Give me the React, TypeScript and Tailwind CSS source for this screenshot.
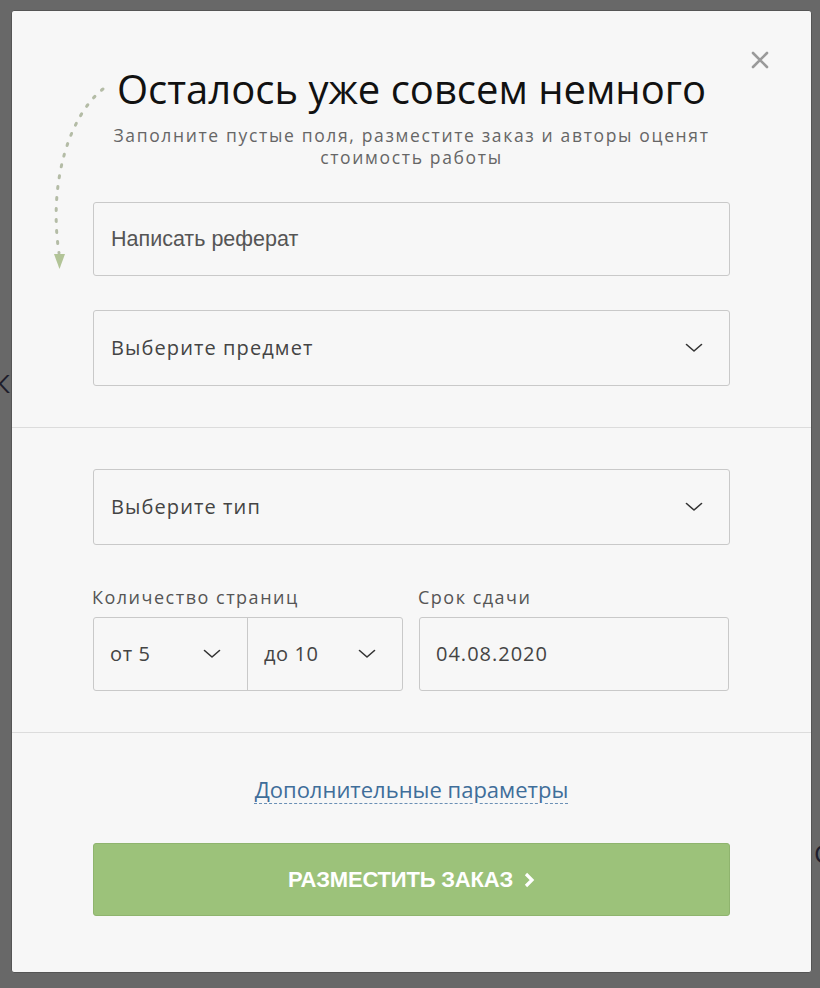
import React from "react";

const Chevron = () => (
  <svg width="18" height="10" viewBox="0 0 18 10" fill="none">
    <polyline points="1.5,1.5 9,8 16.5,1.5" stroke="#333" strokeWidth="1.6" strokeLinecap="round" strokeLinejoin="round" />
  </svg>
);

// dotted arrow at the left of the title
const Arc = () => (
  <svg className="absolute left-[28px] top-[70px]" width="80" height="200" viewBox="0 0 80 200" fill="none">
    <path
      d="M63 8 C 30 34, 8 100, 19 172"
      stroke="#b4bca6"
      strokeWidth="3"
      strokeDasharray="2 9"
      strokeLinecap="round"
    />
    <polygon points="14,173 25,173 19.5,188" fill="#b2c497" />
  </svg>
);

const App = () => {
  return (
    <div className="relative w-[820px] h-[988px] bg-[#686868] overflow-hidden" style={{ fontFamily: '"Open Sans", "Noto Sans", sans-serif' }}>
      {/* page text peeking behind the overlay */}
      <div className="absolute left-[-6px] top-[364px] text-[26px] text-[#1d1d2b]">К</div>
      <div className="absolute left-[814px] top-[834px] text-[26px] text-[#1d1d2b]">С</div>

      <div className="relative ml-[11px] mt-[10px] w-[801px] h-[963px] bg-[#f7f7f7] rounded-[3px] border border-[#555]">
        <Arc />
        <button className="absolute right-[42px] top-[40px] text-[#999]">
          <svg width="18" height="18" viewBox="0 0 18 18">
            <path d="M2 2 L16 16 M16 2 L2 16" stroke="#9a9a9a" strokeWidth="2.6" strokeLinecap="round" />
          </svg>
        </button>

        <div className="px-[81px] pt-[55px]">
          <h1 className="text-center text-[40px] leading-[46px] text-[#111]">Осталось уже совсем немного</h1>
          <p className="mt-[12px] text-center text-[17.5px] leading-[22px] text-[#666] tracking-[1.65px]">
            Заполните пустые поля, разместите заказ и авторы оценят
            <br />
            стоимость работы
          </p>

          <div
            className="mt-[34px] h-[74px] border border-[#c9c9c9] rounded-[3px] flex items-center px-[17px] text-[21.5px] text-[#555]"
            style={{ fontFamily: '"Liberation Sans", Arial, sans-serif' }}
          >
            Написать реферат
          </div>

          <div className="mt-[34px] h-[76px] border border-[#c9c9c9] rounded-[3px] flex items-center justify-between pl-[17px] pr-[26px] text-[20px] tracking-[1.1px] text-[#444]">
            <span>Выберите предмет</span>
            <Chevron />
          </div>
        </div>

        <div className="mt-[41px] h-px bg-[#dcdcdc]" />

        <div className="px-[81px]">
          <div className="mt-[41px] h-[76px] border border-[#c9c9c9] rounded-[3px] flex items-center justify-between pl-[17px] pr-[26px] text-[20px] tracking-[1.1px] text-[#444]">
            <span>Выберите тип</span>
            <Chevron />
          </div>

          <div className="mt-[40px] flex gap-[16px] text-[18px] text-[#555]">
            <div className="w-[310px]">
              <div className="leading-[24px] tracking-[1.5px] -ml-px">Количество страниц</div>
              <div className="mt-[8px] h-[74px] flex border border-[#c9c9c9] rounded-[3px] text-[20px] tracking-[0.6px] text-[#444]">
                <div className="w-[154px] flex items-center justify-between pl-[16px] pr-[26px] border-r border-[#c9c9c9]">
                  <span>от 5</span>
                  <Chevron />
                </div>
                <div className="flex-1 flex items-center justify-between pl-[16px] pr-[26px]">
                  <span>до 10</span>
                  <Chevron />
                </div>
              </div>
            </div>
            <div className="w-[310px]">
              <div className="leading-[24px] tracking-[1.5px] -ml-px">Срок сдачи</div>
              <div className="mt-[8px] h-[74px] flex items-center border border-[#c9c9c9] rounded-[3px] pl-[16px] text-[20px] tracking-[1px] text-[#444]">
                04.08.2020
              </div>
            </div>
          </div>
        </div>

        <div className="mt-[41px] h-px bg-[#dcdcdc]" />

        <div className="px-[81px]">
          <div className="mt-[41px] text-center leading-[30px]">
            <a href="#" className="text-[22px] text-[#3f6e9a] underline decoration-dashed decoration-[#6a8fb5] underline-offset-[5px] decoration-1">
              Дополнительные параметры
            </a>
          </div>

          <button
            className="mt-[36px] w-full h-[73px] bg-[#9cc27a] rounded-[3px] border border-[#8fb46e] flex items-center justify-center gap-[10px] text-white text-[22px] font-bold"
            style={{ fontFamily: '"Liberation Sans", Arial, sans-serif' }}
          >
            <span className="tracking-[-0.2px]">РАЗМЕСТИТЬ ЗАКАЗ</span>
            <svg width="12" height="16" viewBox="0 0 12 16">
              <polyline points="3,2 9,8 3,14" stroke="#fff" strokeWidth="3.2" fill="none" />
            </svg>
          </button>
        </div>
      </div>
    </div>
  );
};

export default App;
